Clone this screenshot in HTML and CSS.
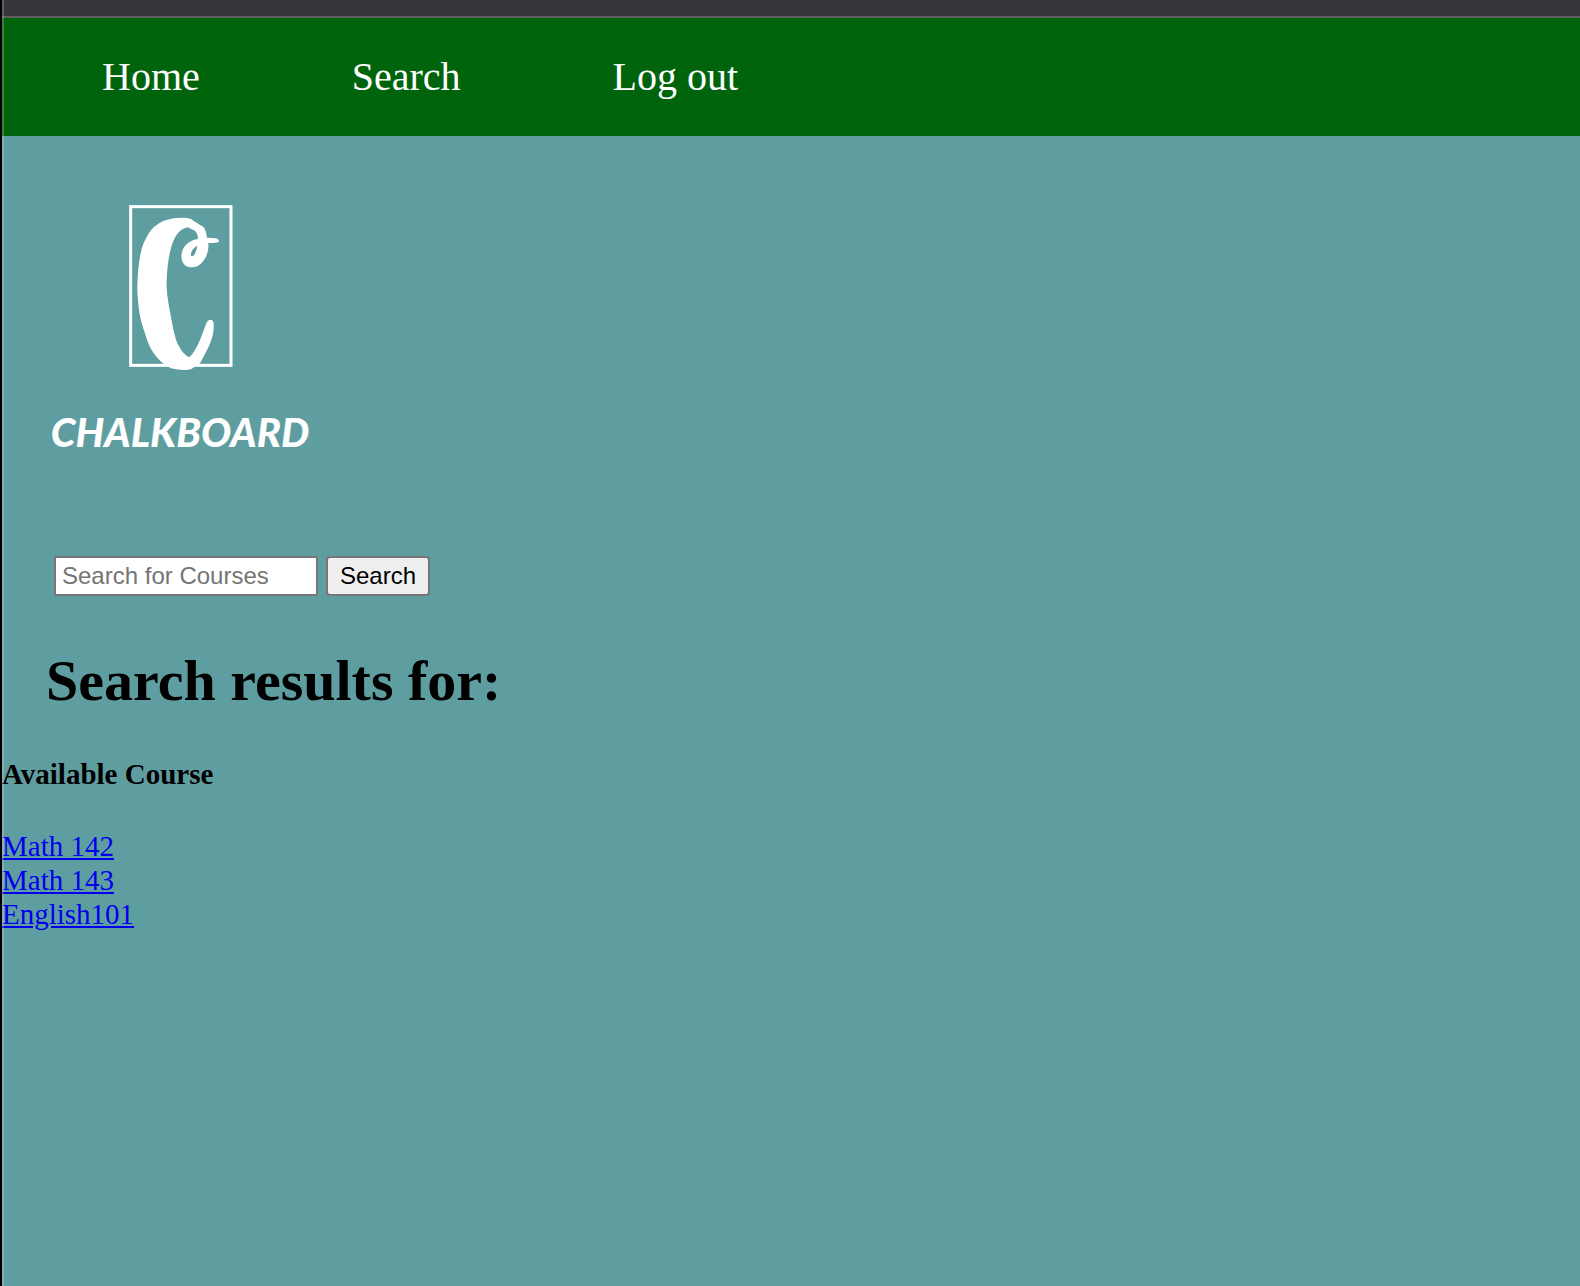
FILE: index.html
```html
<!DOCTYPE html>
<html lang="en">
<head>
  <meta charset="utf-8">
  <title>Chalkboard - Search</title>
  <link rel="stylesheet" href="styles.css">
</head>
<body>
  <div class="toolbar"></div>
  <nav class="nav">
    <a class="nav-link" href="#">Home</a>
    <a class="nav-link" href="#">Search</a>
    <a class="nav-link" href="#">Log out</a>
  </nav>
  <main class="page">
    <div class="logo">
      <svg class="logo-mark" viewBox="0 0 420 570" aria-hidden="true">
        <rect x="62" y="50" width="301" height="476" fill="none" stroke="#fff" stroke-width="9"/>
        <path fill="#fff" fill-rule="evenodd" d="M327 152C326 158 320 159 295 159C297 190 285 215 262 229C250 234 235 232 228 228C214 218 212 200 216 185C222 165 240 150 264 147C264 132 256 122 250 120C243 118 238 113 231 112C222 116 212 119 205 128C185 150 173 200 170 270C168 300 175 340 181 370C188 410 196 455 208 470C216 486 226 496 238 502C262 480 275 435 287 405C292 387 308 384 311 400C313 440 300 465 270 520C260 524 250 538 235 539C215 541 195 538 180 533C140 515 115 470 105 430C90 390 84 350 82 300C82 240 90 180 103 155C115 130 125 115 140 105C160 90 185 84 205 84C225 82 240 82 250 92C270 105 283 110 284 116Q290 130 291 143L318 145Q327 147 327 152ZM262 168C250 172 242 185 243 198C250 203 258 190 262 168Z"/>
      </svg>
      <span class="logo-name">CHALKBOARD</span>
    </div>
    <form class="search">
      <input class="search-input" type="text" placeholder="Search for Courses" aria-label="Search for Courses">
      <button class="search-button" type="button">Search</button>
    </form>
    <h1 class="title">Search results for:</h1>
    <h2 class="subtitle">Available Course</h2>
    <ul class="courses">
      <li><a href="#">Math 142</a></li>
      <li><a href="#">Math 143</a></li>
      <li><a href="#">English101</a></li>
    </ul>
  </main>
</body>
</html>
```
FILE: styles.css
```css
* {
  box-sizing: border-box;
}

body {
  position: relative;
  min-height: 100vh;
  margin: 0;
  border-left: 2px solid #000;
  background: #5f9ea0;
  color: #000;
  font: 29px/34px "Liberation Serif", "Times New Roman", serif;
}

/* light edge of the window, over every band */
body::before {
  content: "";
  position: absolute;
  inset: 0 auto 0 0;
  width: 2px;
  background: rgba(255, 255, 255, 0.2);
  pointer-events: none;
}

.toolbar {
  height: 18px;
  border-bottom: 2px solid #5f6063;
  background: #35363a;
}

.nav {
  display: flex;
  gap: 152px;
  padding: 36px 100px;
  background: #00640d;
}

.nav-link {
  color: #fff;
  font-size: 40px;
  line-height: 46px;
  text-decoration: none;
}

.page {
  padding-top: 54px;
}

.logo {
  display: flex;
  flex-direction: column;
  align-items: center;
  gap: 28px;
  width: 260px;
  margin-left: 48px;
}

.logo-mark {
  width: 140px;
  height: 190px;
}

.logo-name {
  color: #fff;
  font: italic 900 40px/48px Lato, sans-serif;
}

.search {
  display: flex;
  gap: 8px;
  margin: 100px 0 0 52px;
}

.search-input,
.search-button {
  height: 40px;
  border: 2px solid #767676;
  font: 24px/32px "Liberation Sans", Arial, sans-serif;
}

.search-input {
  width: 264px;
  padding: 0 6px;
  border-radius: 2px;
  background: #fff;
}

.search-input::placeholder {
  color: #757575;
}

.search-button {
  padding: 0 12px;
  border-radius: 4px;
  background: #efefef;
  color: #000;
}

.title {
  margin: 52px 0 43px 44px;
  font-size: 58px;
  line-height: 66px;
}

.subtitle {
  margin: 0 0 38px;
  font-size: 29px;
}

.courses {
  margin: 0;
  padding: 0;
  list-style: none;
}

.courses a {
  color: #0000ee;
}
```
